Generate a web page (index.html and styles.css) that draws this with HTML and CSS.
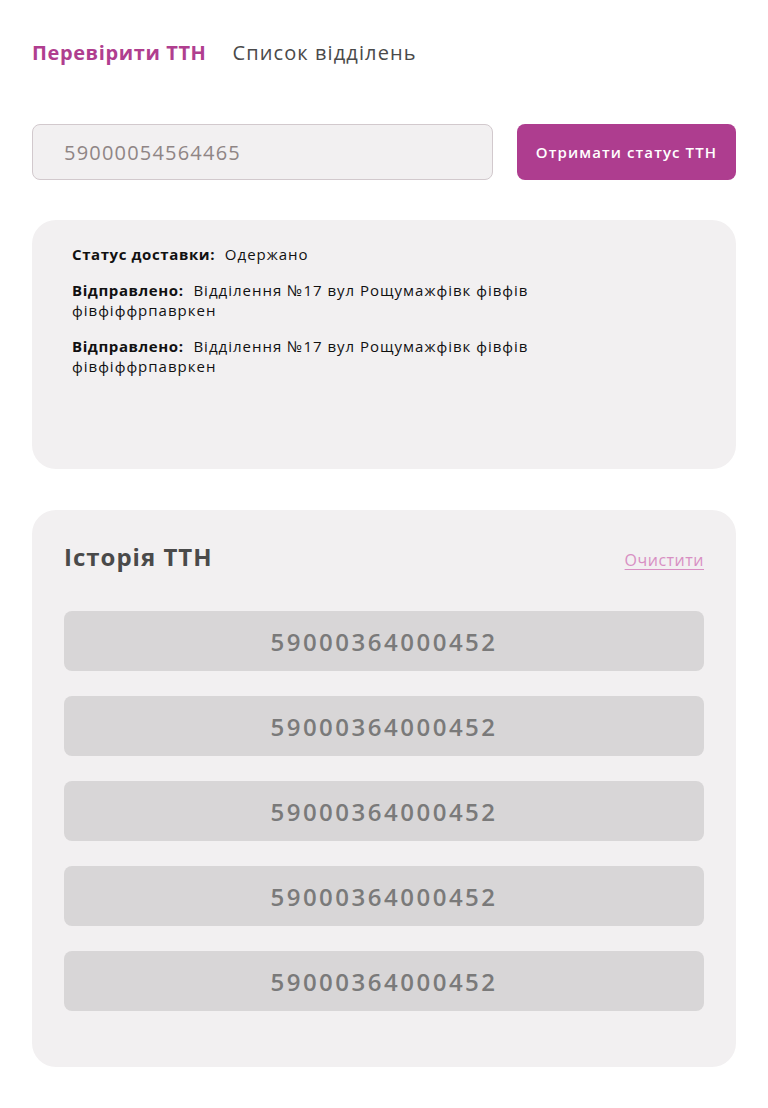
FILE: index.html
```html
<!DOCTYPE html>
<html lang="uk">
<head>
<meta charset="utf-8">
<link rel="stylesheet" href="styles.css">
</head>
<body>
<div class="page">
  <nav class="tabs">
    <a class="tab active">Перевірити ТТН</a>
    <a class="tab">Список відділень</a>
  </nav>
  <form class="search">
    <input class="ttn-input" type="text" value="59000054564465">
    <button class="ttn-btn" type="button">Отримати статус ТТН</button>
  </form>
  <section class="card status">
    <p class="row"><b>Статус доставки:</b>&nbsp; Одержано</p>
    <p class="row"><b>Відправлено:</b>&nbsp; Відділення №17 вул Рощумажфівк фівфів фівфіффрпавркен</p>
    <p class="row"><b>Відправлено:</b>&nbsp; Відділення №17 вул Рощумажфівк фівфів фівфіффрпавркен</p>
  </section>
  <section class="card history">
    <div class="history-head">
      <h2>Історія ТТН</h2>
      <a class="clear">Очистити</a>
    </div>
    <ul class="list">
      <li>59000364000452</li>
      <li>59000364000452</li>
      <li>59000364000452</li>
      <li>59000364000452</li>
      <li>59000364000452</li>
    </ul>
  </section>
</div>
</body>
</html>
```
FILE: styles.css
```css
* { box-sizing: border-box; }
body {
  margin: 0;
  background: #fff;
  font-family: "Open Sans", "Noto Sans", sans-serif;
}
.page {
  padding: 32px 32px 40px;
  display: flex;
  flex-direction: column;
}
.tabs {
  display: flex;
  gap: 26px;
  height: 40px;
  align-items: center;
  margin-bottom: 52px;
}
.tab {
  font-size: 20px;
  color: #4a4a4a;
  letter-spacing: 1.1px;
}
.tab.active {
  color: #b03e8f;
  font-weight: 700;
  letter-spacing: 0.6px;
}
.search {
  display: flex;
  gap: 24px;
  margin: 0 0 40px;
}
.ttn-input {
  width: 461px;
  height: 56px;
  background: #f2f0f1;
  border: 1px solid #d2c9cd;
  border-radius: 8px;
  padding: 0 31px;
  font: 20px "Open Sans", sans-serif;
  color: #8f8585;
  letter-spacing: 1.2px;
}
.ttn-btn {
  flex: 1;
  height: 56px;
  background: #ae3d8f;
  border: none;
  border-radius: 8px;
  color: #fff;
  font: 600 15px "Open Sans", sans-serif;
  letter-spacing: 1.1px;
}
.card {
  background: #f2f0f1;
  border-radius: 24px;
}
.status {
  height: 249px;
  padding: 24px 40px 20px;
  margin-bottom: 41px;
}
.row {
  margin: 0 0 16px;
  font-size: 15px;
  line-height: 20px;
  color: #111;
  width: 495px;
  letter-spacing: 1px;
}
.row b { font-weight: 700; letter-spacing: 0.6px; }
.history {
  padding: 30px 32px 56px;
}
.history-head {
  display: flex;
  justify-content: space-between;
  align-items: baseline;
  margin-bottom: 38px;
}
.history-head h2 {
  margin: 0;
  font-size: 24px;
  font-weight: 700;
  color: #4a4a4a;
  letter-spacing: 1px;
}
.clear {
  font-size: 16px;
  color: #d88fc3;
  text-decoration: underline;
  text-underline-offset: 3px;
  letter-spacing: 0.5px;
}
.list {
  list-style: none;
  margin: 0;
  padding: 0;
  display: flex;
  flex-direction: column;
  gap: 25px;
}
.list li {
  height: 60px;
  background: #d8d6d7;
  border-radius: 8px;
  display: flex;
  align-items: center;
  justify-content: center;
  font-size: 24px;
  font-weight: 600;
  color: #7a7a7a;
  letter-spacing: 2.5px;
}
```
